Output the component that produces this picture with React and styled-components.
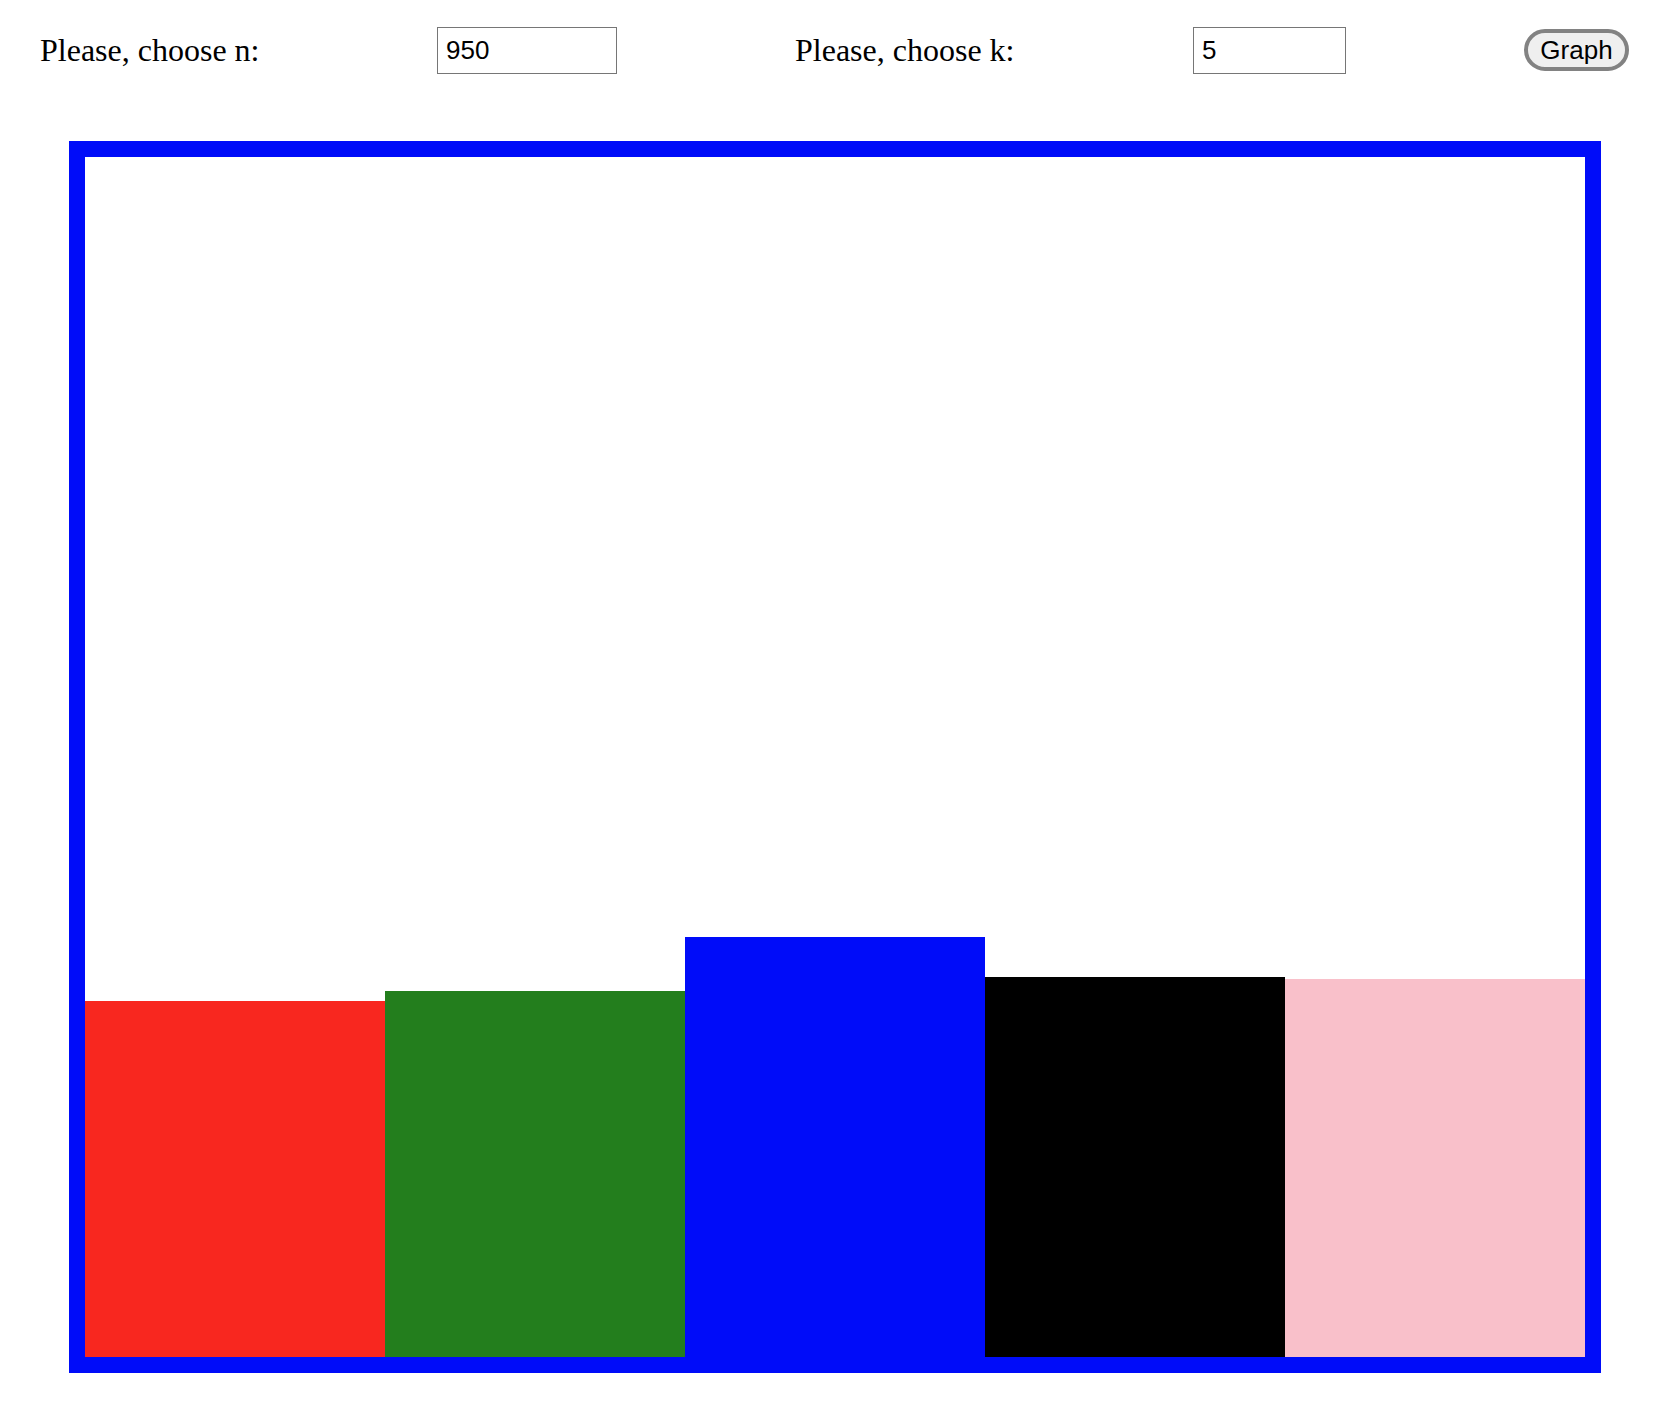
import React from "react";
import styled, { createGlobalStyle } from "styled-components";

const Global = createGlobalStyle`
  html, body {
    margin: 0;
    padding: 0;
    background: #ffffff;
  }
  body {
    font-family: "Liberation Serif", "Times New Roman", serif;
  }
`;

const Page = styled.div`
  display: flex;
  flex-direction: column;
  width: 1655px;
`;

const Toolbar = styled.div`
  display: grid;
  grid-template-columns: 397px 358px 398px 331px auto;
  align-items: center;
  padding: 27px 0 0 40px;
  height: 47px;
`;

const Label = styled.label`
  font-family: "Liberation Serif", "Times New Roman", serif;
  font-size: 32px;
  color: #000;
  white-space: nowrap;
`;

const NumberInput = styled.input`
  box-sizing: border-box;
  width: ${(p) => p.$w}px;
  height: 47px;
  border: 1px solid #767676;
  padding: 0 8px;
  margin: 0;
  font-family: "Liberation Sans", Arial, sans-serif;
  font-size: 26px;
  color: #000;
  background: #fff;
  outline: none;
  border-radius: 0;
`;

const GraphButton = styled.button`
  box-sizing: border-box;
  width: 105px;
  height: 42px;
  margin-top: -1px;
  border: 4px solid #828282;
  border-radius: 21px;
  background: #efefef;
  font-family: "Liberation Sans", Arial, sans-serif;
  font-size: 26px;
  color: #000;
  padding: 0;
  display: flex;
  align-items: center;
  justify-content: center;
  line-height: 1;
`;

const Chart = styled.div`
  display: flex;
  align-items: flex-end;
  width: 1500px;
  height: 1200px;
  border: 16px solid #000cf9;
  margin: 67px 0 0 69px;
`;

const Bar = styled.div`
  width: 300px;
  flex: none;
  background: ${(p) => p.$color};
`;

const bars = [
  { count: 178, color: "#f8271f" },
  { count: 183, color: "#237e1d" },
  { count: 210, color: "#000cf9" },
  { count: 190, color: "#000000" },
  { count: 189, color: "#f9c0ca" },
];

export default function App() {
  return (
    <Page>
      <Global />
      <Toolbar>
        <Label>Please, choose n:</Label>
        <NumberInput $w={180} defaultValue="950" />
        <Label>Please, choose k:</Label>
        <NumberInput $w={153} defaultValue="5" />
        <GraphButton>Graph</GraphButton>
      </Toolbar>
      <Chart>
        {bars.map((b, i) => (
          <Bar key={i} $color={b.color} style={{ height: `${b.count * 2}px` }} />
        ))}
      </Chart>
    </Page>
  );
}
